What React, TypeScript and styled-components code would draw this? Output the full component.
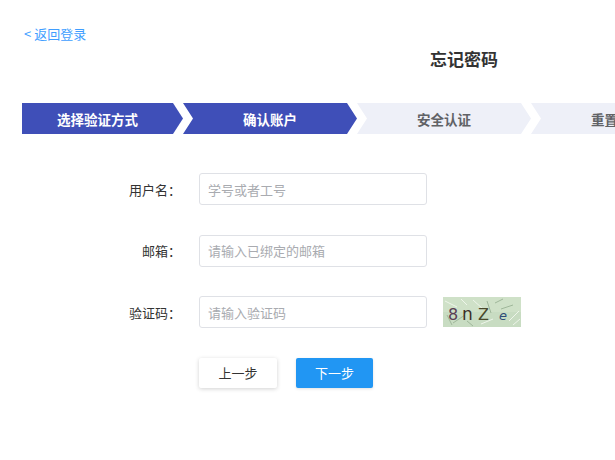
import React from "react";
import styled, { createGlobalStyle, css } from "styled-components";

const GlobalStyle = createGlobalStyle`
  html, body {
    margin: 0;
    padding: 0;
    background: #ffffff;
    overflow: hidden;
  }
  body {
    font-family: "Noto Sans CJK SC", "Noto Sans", sans-serif;
    color: #333;
  }
`;

const Page = styled.div`
  width: 884px;
  padding: 26px 0 40px 22px;
  box-sizing: content-box;
`;

const BackLink = styled.a`
  display: block;
  margin-left: 2px;
  font-size: 13px;
  line-height: 16px;
  color: #409eff;
  text-decoration: none;
  cursor: pointer;
`;

const Title = styled.h1`
  margin: 5px 0 0;
  font-size: 17px;
  line-height: 24px;
  font-weight: 700;
  color: #333;
  text-align: center;
`;

const Steps = styled.div`
  display: flex;
  margin-top: 32px;
  height: 31px;
`;

const Step = styled.div<{ $active?: boolean; $first?: boolean; $w: number }>`
  flex: 0 0 ${(p) => p.$w}px;
  height: 31px;
  display: flex;
  align-items: center;
  justify-content: center;
  font-size: 13.5px;
  font-weight: 700;
  box-sizing: border-box;
  background: ${(p) => (p.$active ? "#3f4fb8" : "#eef0f8")};
  color: ${(p) => (p.$active ? "#ffffff" : "#606266")};
  ${(p) =>
    p.$first
      ? css`
          padding-right: 10px;
          clip-path: polygon(0 0, calc(100% - 10px) 0, 100% 50%, calc(100% - 10px) 100%, 0 100%);
        `
      : css`
          clip-path: polygon(0 0, calc(100% - 10px) 0, 100% 50%, calc(100% - 10px) 100%, 0 100%, 10px 50%);
        `}
`;

const Form = styled.div`
  margin-top: 39px;
  display: flex;
  flex-direction: column;
  gap: 29.5px;
`;

const Row = styled.div`
  display: grid;
  grid-template-columns: 159px 228px auto;
  column-gap: 18px;
  align-items: center;
  height: 32px;
`;

const Label = styled.label`
  text-align: right;
  font-size: 13px;
  color: #333;
`;

const Input = styled.input`
  box-sizing: border-box;
  width: 228px;
  height: 32px;
  border: 1px solid #dfe1e6;
  border-radius: 3px;
  padding: 0 8px;
  font-family: "Noto Sans CJK SC", "Noto Sans", sans-serif;
  font-size: 13px;
  color: #333;
  outline: none;
  &::placeholder {
    color: #a9abb0;
  }
`;

const Captcha = styled.svg`
  display: block;
  margin-left: -2px;
`;

const Buttons = styled.div`
  display: flex;
  gap: 19px;
  margin-left: 177px;
`;

const Button = styled.button<{ $primary?: boolean; $w: number }>`
  width: ${(p) => p.$w}px;
  height: 30px;
  border: none;
  border-radius: 2px;
  font-family: "Noto Sans CJK SC", "Noto Sans", sans-serif;
  font-size: 13px;
  cursor: pointer;
  background: ${(p) => (p.$primary ? "#2196f3" : "#ffffff")};
  color: ${(p) => (p.$primary ? "#ffffff" : "#333")};
  box-shadow: ${(p) =>
    p.$primary ? "0 1px 3px rgba(0,0,0,0.12)" : "0 1px 4px rgba(0,0,0,0.18)"};
`;

const steps = [
  { text: "选择验证方式", active: true, w: 161 },
  { text: "确认账户", active: true, w: 174 },
  { text: "安全认证", active: false, w: 174 },
  { text: "重置密码", active: false, w: 174 },
  { text: "完成", active: false, w: 174 },
];

function CaptchaImage() {
  const noise = [
    "M2 4 L14 10", "M10 26 L22 18", "M30 3 L40 12", "M52 6 L60 2", "M66 24 L76 14",
    "M4 18 L9 28", "M38 27 L50 22", "M58 12 L70 8", "M18 2 L24 8", "M44 4 L48 16",
    "M70 28 L77 22", "M24 24 L30 29",
  ];
  return (
    <Captcha width="78" height="30" viewBox="0 0 78 30">
      <rect width="78" height="30" fill="#c8dcc2" />
      <rect x="0" y="0" width="78" height="15" fill="#d3e4cc" opacity="0.6" />
      {noise.map((d, i) => (
        <path key={i} d={d} stroke={i % 2 ? "#9fb79a" : "#eef5ea"} strokeWidth="1" fill="none" />
      ))}
      <text x="5" y="23" fontFamily="DejaVu Sans, sans-serif" fontSize="16" fill="#5a3e55">8</text>
      <text x="19" y="23" fontFamily="DejaVu Sans, sans-serif" fontSize="17" fill="#3b2e29">n</text>
      <text x="35" y="23" fontFamily="DejaVu Sans, sans-serif" fontSize="16" fill="#48492c">Z</text>
      <text x="56" y="23" fontFamily="DejaVu Sans, sans-serif" fontSize="13" fontStyle="italic" fill="#2e4c78">e</text>
    </Captcha>
  );
}

export default function App() {
  return (
    <>
      <GlobalStyle />
      <Page>
        <BackLink>&lt; 返回登录</BackLink>
        <Title>忘记密码</Title>
        <Steps>
          {steps.map((s, i) => (
            <Step key={s.text} $active={s.active} $first={i === 0} $w={s.w}>
              {s.text}
            </Step>
          ))}
        </Steps>
        <Form>
          <Row>
            <Label>用户名：</Label>
            <Input placeholder="学号或者工号" />
          </Row>
          <Row>
            <Label>邮箱：</Label>
            <Input placeholder="请输入已绑定的邮箱" />
          </Row>
          <Row>
            <Label>验证码：</Label>
            <Input placeholder="请输入验证码" />
            <CaptchaImage />
          </Row>
          <Buttons>
            <Button $w={78}>上一步</Button>
            <Button $w={77} $primary>
              下一步
            </Button>
          </Buttons>
        </Form>
      </Page>
    </>
  );
}
